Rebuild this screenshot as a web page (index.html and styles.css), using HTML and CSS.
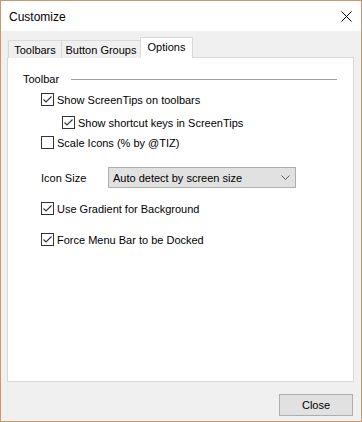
FILE: index.html
```html
<!DOCTYPE html>
<html lang="en">

<head>
    <meta charset="UTF-8">
    <title>Customize</title>
    <link rel="stylesheet" href="styles.css">
</head>

<body>
    <div class="window">
        <div class="titlebar">
            <span class="title">Customize</span>
            <svg class="close-x" width="11" height="11" viewBox="0 0 11 11">
                <path d="M0.5 0.5 L10.5 10.5 M10.5 0.5 L0.5 10.5" stroke="#000" stroke-width="1" fill="none"/>
            </svg>
        </div>

        <div class="content">
            <!-- tabs -->
            <div class="tabs">
                <div class="tab tab-toolbars">Toolbars</div>
                <div class="tab tab-groups">Button Groups</div>
                <div class="tab tab-options active">Options</div>
            </div>

            <div class="panel">
                <div class="group-head">
                    <span>Toolbar</span>
                    <div class="group-line"></div>
                </div>

                <label class="check-row row-tips">
                    <span class="box checked"></span>
                    <span>Show ScreenTips on toolbars</span>
                </label>
                <label class="check-row row-keys">
                    <span class="box checked"></span>
                    <span>Show shortcut keys in ScreenTips</span>
                </label>
                <label class="check-row row-scale">
                    <span class="box"></span>
                    <span>Scale Icons (% by @TIZ)</span>
                </label>

                <div class="select-row">
                    <span class="select-label">Icon Size</span>
                    <div class="select">
                        <span>Auto detect by screen size</span>
                        <svg width="9" height="5" viewBox="0 0 9 5">
                            <path d="M0.5 0.5 L4.5 4.5 L8.5 0.5" stroke="#606060" stroke-width="1" fill="none"/>
                        </svg>
                    </div>
                </div>

                <label class="check-row row-gradient">
                    <span class="box checked"></span>
                    <span>Use Gradient for Background</span>
                </label>
                <label class="check-row row-docked">
                    <span class="box checked"></span>
                    <span>Force Menu Bar to be Docked</span>
                </label>
            </div>

            <div class="footer">
                <button class="btn">Close</button>
            </div>
        </div>
    </div>
</body>

</html>
```

FILE: styles.css
```css
/* general */

body {
    margin: 0;
    font-family: 'Liberation Sans', Arial, sans-serif;
    font-size: 11px;
    color: #000;
}

.window {
    width: 360px;
    height: 420px;
    border: 1px solid #c9996b;
    background: #f0f0f0;
    display: flex;
    flex-direction: column;
}

.titlebar {
    height: 30px;
    background: #fff;
    display: flex;
    align-items: center;
    justify-content: space-between;
    padding: 0 9px 0 8px;
}

.title {
    font-size: 12px;
    margin-top: 1px;
}

.close-x {
    margin-top: 1px;
}

.content {
    padding: 0 7px 0 6px;
    display: flex;
    flex-direction: column;
}

/* tabs */

.tabs {
    display: flex;
    align-items: flex-end;
    margin-top: 10px;
    padding-left: 1px;
    height: 17px;
    margin-bottom: -1px;
    position: relative;
    z-index: 1;
}

.tab {
    box-sizing: border-box;
    height: 18px;
    border: 1px solid #d9d9d9;
    border-bottom: none;
    background: #f0f0f0;
    text-align: center;
    line-height: 18px;
    margin-right: -1px;
}

.tab-toolbars {
    width: 54px;
}

.tab-groups {
    width: 80px;
}

.tab-options {
    width: 53px;
}

.tab.active {
    height: 21px;
    background: #fff;
    line-height: 18px;
}

/* panel */

.panel {
    box-sizing: border-box;
    height: 325px;
    border: 1px solid #d9d9d9;
    background: #fff;
    padding: 13px 16px 0 15px;
    display: flex;
    flex-direction: column;
}

.group-head {
    display: flex;
    align-items: center;
    height: 16px;
}

.group-line {
    flex: 1;
    height: 1px;
    background: #a0a0a0;
    margin-left: 12px;
}

.check-row {
    display: flex;
    align-items: center;
    height: 17px;
    gap: 3px;
}

.row-tips {
    margin: 4px 0 0 18px;
}

.row-keys {
    margin: 6px 0 0 39px;
}

.row-scale {
    margin: 3px 0 0 18px;
}

.row-gradient {
    margin: 12px 0 0 18px;
}

.row-docked {
    margin: 14px 0 0 18px;
}

.box {
    box-sizing: border-box;
    width: 13px;
    height: 13px;
    border: 1px solid #333;
    background: #fff;
    flex-shrink: 0;
}

.box.checked {
    background: #fff url("data:image/svg+xml;utf8,<svg xmlns='http://www.w3.org/2000/svg' width='11' height='11' viewBox='0 0 11 11'><path d='M1.5 5.5 L4 8 L9.5 2.5' stroke='%23333' stroke-width='1.1' fill='none'/></svg>") no-repeat center;
}

/* dropdown */

.select-row {
    display: flex;
    align-items: center;
    margin: 16px 0 0 18px;
    height: 21px;
}

.select-label {
    width: 67px;
}

.select {
    box-sizing: border-box;
    width: 188px;
    height: 21px;
    border: 1px solid #adadad;
    background: #e1e1e1;
    display: flex;
    align-items: center;
    justify-content: space-between;
    padding: 0 5px 0 4px;
}

/* footer */

.footer {
    display: flex;
    justify-content: flex-end;
    margin-top: 12px;
    padding-right: 1px;
}

.btn {
    box-sizing: border-box;
    width: 74px;
    height: 22px;
    border: 1px solid #adadad;
    background: #e1e1e1;
    font-family: 'Liberation Sans', Arial, sans-serif;
    font-size: 11px;
    color: #000;
    padding: 0;
}
```
